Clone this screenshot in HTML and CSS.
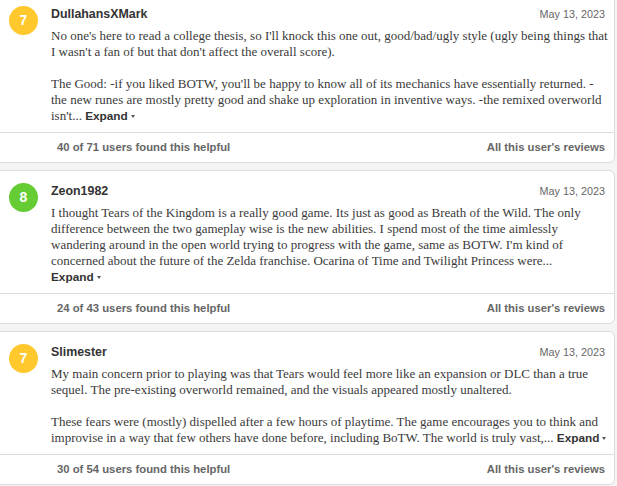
FILE: index.html
```html
<!DOCTYPE html>
<html lang="en">
<head>
  <meta charset="UTF-8">
  <meta name="viewport" content="width=device-width, initial-scale=1.0">
  <title>User Reviews</title>
  <link rel="stylesheet" href="styles.css">
</head>
<body>
  <div class="reviews">
    <div class="review">
      <div class="review-top">
        <div class="score score-mixed">7</div>
        <div class="review-main">
          <div class="review-head">
            <span class="author">DullahansXMark</span>
            <span class="date">May 13, 2023</span>
          </div>
          <div class="review-body">
            <p>No one's here to read a college thesis, so I'll knock this one out, good/bad/ugly style (ugly being things that I wasn't a fan of but that don't affect the overall score).</p>
            <p>The Good: -if you liked BOTW, you'll be happy to know all of its mechanics have essentially returned. - the new runes are mostly pretty good and shake up exploration in inventive ways. -the remixed overworld isn't... <span class="expand">Expand<span class="caret"></span></span></p>
          </div>
        </div>
      </div>
      <div class="review-foot">
        <span>40 of 71 users found this helpful</span>
        <span>All this user's reviews</span>
      </div>
    </div>

    <div class="review">
      <div class="review-top">
        <div class="score score-good">8</div>
        <div class="review-main">
          <div class="review-head">
            <span class="author">Zeon1982</span>
            <span class="date">May 13, 2023</span>
          </div>
          <div class="review-body">
            <p>I thought Tears of the Kingdom is a really good game. Its just as good as Breath of the Wild. The only difference between the two gameplay wise is the new abilities. I spend most of the time aimlessly wandering around in the open world trying to progress with the game, same as BOTW. I'm kind of concerned about the future of the Zelda franchise. Ocarina of Time and Twilight Princess were...<br><span class="expand">Expand<span class="caret"></span></span></p>
          </div>
        </div>
      </div>
      <div class="review-foot">
        <span>24 of 43 users found this helpful</span>
        <span>All this user's reviews</span>
      </div>
    </div>

    <div class="review">
      <div class="review-top">
        <div class="score score-mixed">7</div>
        <div class="review-main">
          <div class="review-head">
            <span class="author">Slimester</span>
            <span class="date">May 13, 2023</span>
          </div>
          <div class="review-body">
            <p>My main concern prior to playing was that Tears would feel more like an expansion or DLC than a true sequel. The pre-existing overworld remained, and the visuals appeared mostly unaltered.</p>
            <p>These fears were (mostly) dispelled after a few hours of playtime. The game encourages you to think and improvise in a way that few others have done before, including BoTW. The world is truly vast,... <span class="expand">Expand<span class="caret"></span></span></p>
          </div>
        </div>
      </div>
      <div class="review-foot">
        <span>30 of 54 users found this helpful</span>
        <span>All this user's reviews</span>
      </div>
    </div>
  </div>
</body>
</html>
```

FILE: styles.css
```css
body {
  margin: 0;
  background-color: #f4f4f4;
  color: #333;
  font-family: "Liberation Sans", Arial, sans-serif;
  overflow: hidden;
}
.reviews {
  margin: -7px 2px 0 -4px;
  display: flex;
  flex-direction: column;
  gap: 7px;
}
.review {
  background: white;
  border: 1px solid #dcdcdc;
  border-radius: 0 6px 6px 0;
}
.review-top {
  display: flex;
  gap: 13px;
  padding: 12px 9px 8px 12px;
}
.score {
  flex: 0 0 29px;
  width: 29px;
  height: 29px;
  border-radius: 50%;
  color: white;
  font-weight: bold;
  font-size: 14px;
  line-height: 29px;
  text-align: center;
}
.score-mixed {
  background-color: #ffc82c;
}
.score-good {
  background-color: #66cc33;
}
.review-main {
  flex: 1;
  min-width: 0;
}
.review-head {
  display: flex;
  justify-content: space-between;
  line-height: 16px;
}
.author {
  font-weight: bold;
  font-size: 12.4px;
  color: #333;
}
.date {
  font-size: 10.8px;
  color: #666;
}
.review-body {
  margin: 6px -5px 0 0;
  font-family: "Liberation Serif", "Times New Roman", serif;
  font-size: 13px;
  line-height: 16px;
  color: #3a3a3a;
}
.review-body p {
  margin: 0 0 16px;
}
.review-body p:last-child {
  margin-bottom: 0;
}
.expand {
  font-family: "Liberation Sans", Arial, sans-serif;
  font-weight: bold;
  font-size: 11.8px;
  color: #333;
  white-space: nowrap;
}
.caret {
  display: inline-block;
  margin-left: 3px;
  vertical-align: middle;
  border-left: 2px solid transparent;
  border-right: 2px solid transparent;
  border-top: 3px solid #555;
}
.review-foot {
  display: flex;
  justify-content: space-between;
  border-top: 1px solid #dcdcdc;
  padding: 0 9px 0 60px;
  height: 29px;
  line-height: 29px;
  font-weight: bold;
  font-size: 11.3px;
  color: #666;
}
```
